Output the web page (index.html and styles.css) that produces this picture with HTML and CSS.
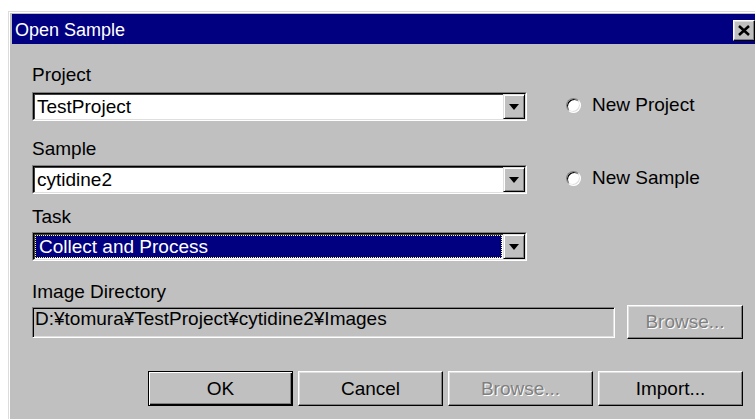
FILE: index.html
```html
<!DOCTYPE html>
<html lang="en">
<head>
<meta charset="utf-8">
<title>Open Sample</title>
<link rel="stylesheet" href="styles.css">
</head>
<body>
<div class="window">
  <div class="titlebar">
    <span class="title">Open Sample</span>
    <span class="close" aria-label="Close">
      <svg width="12" height="11" viewBox="0 0 12 11"><path d="M1 1 L11 10 M11 1 L1 10" stroke="#000" stroke-width="2.6" fill="none"/></svg>
    </span>
  </div>
  <div class="content">
    <div class="label">Project</div>
    <div class="row row-project">
      <div class="combo">
        <div class="combo-in">
          <div class="combo-text">TestProject</div>
          <div class="drop"><span class="arrow"></span></div>
        </div>
      </div>
      <div class="radio"><span class="dot"></span>New Project</div>
    </div>

    <div class="label label-sample">Sample</div>
    <div class="row row-sample">
      <div class="combo">
        <div class="combo-in">
          <div class="combo-text">cytidine2</div>
          <div class="drop"><span class="arrow"></span></div>
        </div>
      </div>
      <div class="radio"><span class="dot"></span>New Sample</div>
    </div>

    <div class="label label-task">Task</div>
    <div class="row row-task">
      <div class="combo">
        <div class="combo-in">
          <div class="combo-text selected">Collect and Process</div>
          <div class="drop"><span class="arrow"></span></div>
        </div>
      </div>
    </div>

    <div class="label label-dir">Image Directory</div>
    <div class="pathrow">
      <div class="pathfield">D:¥tomura¥TestProject¥cytidine2¥Images</div>
      <div class="btn btn-small disabled">Browse...</div>
    </div>

    <div class="buttons">
      <div class="btn default">OK</div>
      <div class="btn">Cancel</div>
      <div class="btn disabled">Browse...</div>
      <div class="btn">Import...</div>
    </div>
  </div>
</div>
</body>
</html>
```

FILE: styles.css
```css
html, body {
  margin: 0;
  padding: 0;
}

body {
  width: 755px;
  height: 419px;
  overflow: hidden;
  background: #fff;
  font-family: "Liberation Sans", Arial, sans-serif;
  font-size: 19px;
  color: #000;
}

/* dialog frame */
.window {
  box-sizing: border-box;
  width: 760px;
  height: 420px;
  margin: 11px 0 0 8px;
  padding: 2px 0 0 3px;
  background: #c0c0c0;
  border-top: 1px solid #dcdcdc;
  border-left: 1px solid #dcdcdc;
  box-shadow: inset 1px 1px 0 #fff;
}

.titlebar {
  width: 743px;
  height: 30px;
  background: #000080;
  color: #fff;
  display: flex;
  align-items: flex-start;
}

.title {
  padding: 3px 0 0 3px;
  line-height: 27px;
  font-size: 18px;
}

.close {
  box-sizing: border-box;
  width: 22px;
  height: 21px;
  margin: 6px 0 0 auto;
  background: #c0c0c0;
  border: 1px solid;
  border-color: #fff #000 #000 #fff;
  box-shadow: inset -1px -1px 0 #808080, inset 1px 1px 0 #dfdfdf;
  display: flex;
  align-items: center;
  justify-content: center;
}

.content {
  padding: 20px 0 0 20px;
}

.label {
  height: 22px;
  line-height: 22px;
}

.label-sample { margin-top: 17px; }
.label-task { margin-top: 12px; }
.label-dir { margin-top: 20px; }

.row {
  display: flex;
  align-items: flex-start;
}

.row-project { margin-top: 6px; }
.row-sample { margin-top: 5px; }
.row-task { margin-top: 4px; }

/* combo box: sunken field with drop button */
.combo {
  box-sizing: border-box;
  width: 495px;
  height: 29px;
  border: 1px solid;
  border-color: #808080 #fff #fff #808080;
  display: flex;
}

.combo-in {
  flex: 1;
  display: flex;
  background: #fff;
  border: 1px solid;
  border-color: #000 #dfdfdf #dfdfdf #000;
  box-shadow: inset 1px 1px 0 #404040;
}

.combo-text {
  flex: 1;
  padding-left: 3px;
  line-height: 25px;
  white-space: nowrap;
}

.combo-text.selected {
  margin: 1px;
  padding-left: 4px;
  line-height: 23px;
  background: #000080;
  color: #fff;
  outline: 1px dotted #ffff80;
  outline-offset: -1px;
}

.drop {
  box-sizing: border-box;
  width: 22px;
  background: #c0c0c0;
  border: 1px solid;
  border-color: #dfdfdf #000 #000 #dfdfdf;
  box-shadow: inset 1px 1px 0 #fff, inset -1px -1px 0 #808080;
  display: flex;
  align-items: center;
  justify-content: center;
}

.arrow {
  width: 0;
  height: 0;
  margin-top: 1px;
  border-left: 5px solid transparent;
  border-right: 5px solid transparent;
  border-top: 6px solid #000;
}

/* radio options */
.radio {
  display: flex;
  align-items: center;
  height: 22px;
  line-height: 22px;
  margin: 2px 0 0 39px;
}

.dot {
  box-sizing: border-box;
  width: 15px;
  height: 15px;
  margin-right: 11px;
  border-radius: 50%;
  background: #fff;
  border: 1px solid;
  border-color: #808080 #fff #fff #808080;
  box-shadow: inset 1px 1px 0 #000, inset -1px -1px 0 #dfdfdf;
}

/* read-only directory field */
.pathrow {
  display: flex;
  align-items: center;
  height: 34px;
  margin-top: 2px;
}

.pathfield {
  box-sizing: border-box;
  width: 583px;
  height: 31px;
  line-height: 20px;
  padding: 1px 0 0 2px;
  white-space: nowrap;
  background: #c0c0c0;
  border: 1px solid;
  border-color: #808080 #fff #fff #808080;
  box-shadow: inset 1px 1px 0 #000, inset -1px -1px 0 #dfdfdf;
}

/* push buttons */
.btn {
  box-sizing: border-box;
  width: 145px;
  height: 35px;
  background: #c0c0c0;
  border: 1px solid;
  border-color: #fff #000 #000 #fff;
  box-shadow: inset -1px -1px 0 #808080, inset 1px 1px 0 #dfdfdf;
  display: flex;
  align-items: center;
  justify-content: center;
  white-space: nowrap;
}

.btn-small {
  width: 116px;
  height: 34px;
  margin-left: 12px;
}

.btn.default {
  border-color: #000;
  box-shadow: inset 1px 1px 0 #fff, inset -1px -1px 0 #000, inset -2px -2px 0 #808080;
}

.btn.disabled {
  color: #808080;
  text-shadow: 1px 1px 0 #fff;
}

.buttons {
  display: flex;
  gap: 5px;
  margin: 32px 0 0 116px;
}
```
